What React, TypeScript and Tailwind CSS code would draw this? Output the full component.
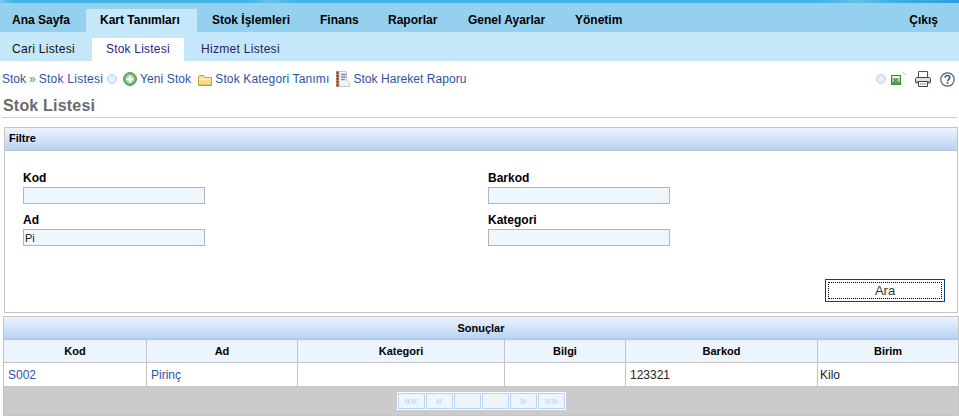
const font = { fontFamily: '"Liberation Sans", Arial, sans-serif' };

const mainNav = [
  { name: "Ana Sayfa", width: "w-[86px]", pad: "pl-3" },
  { name: "Kart Tanımları", width: "w-[111px]", pad: "pl-[14px]", active: true },
  { name: "Stok İşlemleri", width: "w-[108px]", pad: "pl-[15px]" },
  { name: "Finans", width: "w-[68px]", pad: "pl-[15px]" },
  { name: "Raporlar", width: "w-[80px]", pad: "pl-[15px]" },
  { name: "Genel Ayarlar", width: "w-[107px]", pad: "pl-[15px]" },
  { name: "Yönetim", width: "w-[80px]", pad: "pl-[15px]" },
];

const columns = [
  { name: "Kod", width: "w-[143px]" },
  { name: "Ad", width: "w-[151px]" },
  { name: "Kategori", width: "w-[207px]" },
  { name: "Bilgi", width: "w-[121px]" },
  { name: "Barkod", width: "w-[192px]" },
  { name: "Birim", width: "grow" },
];

const pager = ["««", "«", "", "", "»", "»»"];

const RadioDot = () => (
  <svg width="10" height="10" viewBox="0 0 10 10" className="block shrink-0">
    <circle cx="5" cy="5" r="4.5" fill="#dbe8fb" stroke="#bcd3f5" />
    <circle cx="5" cy="5" r="2.6" fill="#e9f1fd" />
  </svg>
);

const PlusIcon = () => (
  <svg width="14" height="14" viewBox="0 0 14 14" className="block shrink-0">
    <circle cx="7" cy="7" r="6.4" fill="#6fb765" stroke="#4f8f4a" />
    <circle cx="7" cy="7" r="4.4" fill="#a5d59c" />
    <path d="M7 3.6v6.8M3.6 7h6.8" stroke="#fff" strokeWidth="2.4" />
  </svg>
);

const FolderIcon = () => (
  <svg width="14" height="11" viewBox="0 0 14 11" className="block shrink-0">
    <path d="M.5 1.5V10.5H13.5V2.5H6.5L5.5.5H1.5Z" fill="#f7dd8b" stroke="#c79a3c" />
    <path d="M1 4H13" stroke="#fff3c4" strokeWidth="1.5" />
    <path d="M1 9.5H13" stroke="#eabf5a" />
  </svg>
);

const NotebookIcon = () => (
  <svg width="14" height="16" viewBox="0 0 14 16" className="block shrink-0">
    <path d="M3 .5H10.5V9L13.5 12V15.5H3Z" fill="#f4f4f4" stroke="#c8c8c8" />
    <path d="M1.5 0V16" stroke="#a9582d" strokeWidth="2" />
    <path d="M0 2h3M0 5h3M0 8h3M0 11h3M0 14h3" stroke="#7a3d1c" />
    <path d="M5 3.5h5M5 6h5M5 8.5h4" stroke="#6f93d8" strokeWidth="1.4" />
  </svg>
);

const ExcelIcon = () => (
  <svg width="15" height="14" viewBox="0 0 15 14" className="block shrink-0">
    <path d="M10.5 3V13" stroke="#f0f0f0" />
    <rect x="0.5" y="3.5" width="9" height="9" fill="#9fcf95" stroke="#3d8a36" />
    <rect x="1" y="4" width="8" height="2" fill="#e3f2df" />
    <rect x="1" y="10" width="8" height="2" fill="#5a9f50" />
    <path d="M3 6.5l3.5 3.5M6.5 6.5l-3.5 3.5" stroke="#2c6a28" />
    <path d="M12 .5l2 2" stroke="#999" />
  </svg>
);

const PrinterIcon = () => (
  <svg width="16" height="16" viewBox="0 0 16 16" className="block shrink-0">
    <path d="M3.5 6.5V.5H12.5V6.5" fill="#fff" stroke="#555" />
    <path d="M.5 11V8C.5 7.1 1.2 6.5 2 6.5H14C14.8 6.5 15.5 7.1 15.5 8V11Z" fill="#e2e2e2" stroke="#444" />
    <path d="M.5 11H15.5V12.5H.5Z" fill="#777" />
    <path d="M3.5 10.5V15.5H12.5V10.5Z" fill="#fff" stroke="#444" />
    <path d="M5 13H11" stroke="#888" />
  </svg>
);

const HelpIcon = () => (
  <svg width="15" height="15" viewBox="0 0 15 15" className="block shrink-0">
    <circle cx="7.5" cy="7.5" r="6.7" fill="#fff" stroke="#4b6484" strokeWidth="1.2" />
    <path d="M5.2 5.8C5.2 4.4 6.2 3.6 7.5 3.6s2.3.8 2.3 2c0 1.8-2.3 1.8-2.3 3.6" fill="none" stroke="#3d5577" strokeWidth="1.5" />
    <rect x="6.7" y="10.2" width="1.6" height="1.7" fill="#3d5577" />
  </svg>
);

const Field = ({ label, value = "" }: { label: string; value?: string }) => (
  <div className="w-[182px]">
    <div className="h-[18px] pt-[2px] text-[12px] leading-[14px] font-bold text-black">{label}</div>
    <input
      readOnly
      value={value}
      className="block h-[17px] w-[182px] border border-[#b5b5b5] bg-[#eef6fe] px-[1px] text-[11px] text-[#222] outline-none"
      style={font}
    />
  </div>
);

export default function App() {
  return (
    <div className="h-[419px] w-[959px] overflow-hidden bg-white text-[12px]" style={font}>
      <div className="h-[3px] bg-[linear-gradient(to_right,#7cc9ea_0px,#40b5e6_12px,#40b5e6_250px,#6cc2e8_270px,#40b5e6_295px,#40b5e6_820px,#66bfe4_860px,#40b0e4_890px,#2e9fdd_959px)]" />
      <nav className="flex h-[29px] items-end bg-[#95d0ee]">
        {mainNav.map((item) => (
          <a
            key={item.name}
            className={`${item.width} ${item.pad} h-[23px] shrink-0 pt-[4px] text-[12px] leading-[14px] font-bold text-black ${
              item.active ? "bg-[#c5e7fa]" : ""
            }`}
          >
            {item.name}
          </a>
        ))}
        <a className="ml-auto h-[23px] pt-[4px] pr-[21px] text-[12px] leading-[14px] font-bold text-black">Çıkış</a>
      </nav>
      <nav className="flex h-[29px] items-end bg-[#c5e7fa] pl-[12px]">
        <a className="h-[23px] w-[80px] pt-[4px] leading-[14px] tracking-[0.3px] text-[#111]">Cari Listesi</a>
        <a className="h-[23px] w-[92px] bg-white pt-[4px] pl-[14px] leading-[14px] tracking-[0.2px] text-[#30207f]">Stok Listesi</a>
        <a className="h-[23px] pt-[4px] pl-[17px] leading-[14px] tracking-[0.3px] text-[#2a1a5e]">Hizmet Listesi</a>
      </nav>

      <div className="flex h-[36px] items-center pl-[2px] text-[12px] text-[#2c52a8]">
        <span>Stok</span>
        <span className="mx-[3px] text-[#777]">»</span>
        <span className="tracking-[0.25px]">Stok Listesi</span>
        <span className="ml-[4px]"><RadioDot /></span>
        <span className="ml-[6px]"><PlusIcon /></span>
        <span className="ml-[3px] tracking-[0.1px]">Yeni Stok</span>
        <span className="mt-[3px] ml-[7px]"><FolderIcon /></span>
        <span className="ml-[3px] tracking-[0.15px]">Stok Kategori Tanımı</span>
        <span className="ml-[7px]"><NotebookIcon /></span>
        <span className="ml-[3px] tracking-[0.05px]">Stok Hareket Raporu</span>
        <div className="ml-auto flex items-center pr-[4px]">
          <RadioDot />
          <span className="ml-[5px]"><ExcelIcon /></span>
          <span className="ml-[9px]"><PrinterIcon /></span>
          <span className="ml-[9px]"><HelpIcon /></span>
        </div>
      </div>

      <h1 className="mx-[2px] h-[21px] border-b border-[#cccccc] pl-[1px] text-[16px] leading-[17px] font-bold tracking-[0.2px] text-[#6b6b6b]">
        Stok Listesi
      </h1>

      <section className="mt-[9px] ml-[4px] h-[186px] w-[954px] border border-[#c4c4c4]">
        <div className="h-[23px] border-b border-[#b9c4d2] bg-linear-to-b from-[#edf3fd] to-[#b7d2f4] pl-[4px] text-[11px] leading-[21px] font-bold text-black">
          Filtre
        </div>
        <div className="flex pt-[18px] pl-[18px]">
          <div className="flex w-[465px] flex-col gap-[7px]">
            <Field label="Kod" />
            <Field label="Ad" value="Pi" />
          </div>
          <div className="flex flex-col gap-[7px]">
            <Field label="Barkod" />
            <Field label="Kategori" />
          </div>
        </div>
        <div className="mt-[33px] flex justify-end pr-[12px]">
          <button className="h-[23px] w-[120px] border border-[#0b3c84] bg-white p-[2px] text-[13px] text-[#333]">
            <span className="block h-[17px] border border-dotted border-black leading-[15px]">Ara</span>
          </button>
        </div>
      </section>

      <section className="mt-[3px] ml-[3px] w-[956px] border border-[#c4c4c4]">
        <div className="h-[23px] border-b border-[#b9c4d2] bg-linear-to-b from-[#edf3fd] to-[#b7d2f4] text-center text-[11px] leading-[22px] font-bold text-black">
          Sonuçlar
        </div>
        <div className="flex h-[23px] border-b border-[#c4c4c4] bg-[#ecf4fe]">
          {columns.map((col, i) => (
            <div
              key={col.name}
              className={`${col.width} ${i < 5 ? "border-r border-[#c4c4c4]" : ""} text-center text-[11px] leading-[22px] font-bold text-black`}
            >
              {col.name}
            </div>
          ))}
        </div>
        <div className="flex h-[24px] border-b border-[#c4c4c4] text-[12px] leading-[25px]">
          <div className="w-[143px] border-r border-[#c4c4c4] pl-[4px] text-[#2c52a8]">S002</div>
          <div className="w-[151px] border-r border-[#c4c4c4] pl-[4px] text-[#2c52a8]">Pirinç</div>
          <div className="w-[207px] border-r border-[#c4c4c4]" />
          <div className="w-[121px] border-r border-[#c4c4c4]" />
          <div className="w-[192px] border-r border-[#c4c4c4] pl-[4px] text-[#222]">123321</div>
          <div className="grow pl-[2px] text-[#222]">Kilo</div>
        </div>
        <div className="flex h-[28px] items-center justify-center bg-[#cbcbcb]">
          <div className="flex h-[18px] gap-[1px] bg-white p-[1px]">
            {pager.map((label, i) => (
              <span
                key={i}
                className="h-[16px] w-[27px] border border-[#b9d3f6] bg-[#eef5fe] text-center text-[12px] leading-[15px] text-[#bcd3f7]"
              >
                {label}
              </span>
            ))}
          </div>
        </div>
      </section>
    </div>
  );
}
